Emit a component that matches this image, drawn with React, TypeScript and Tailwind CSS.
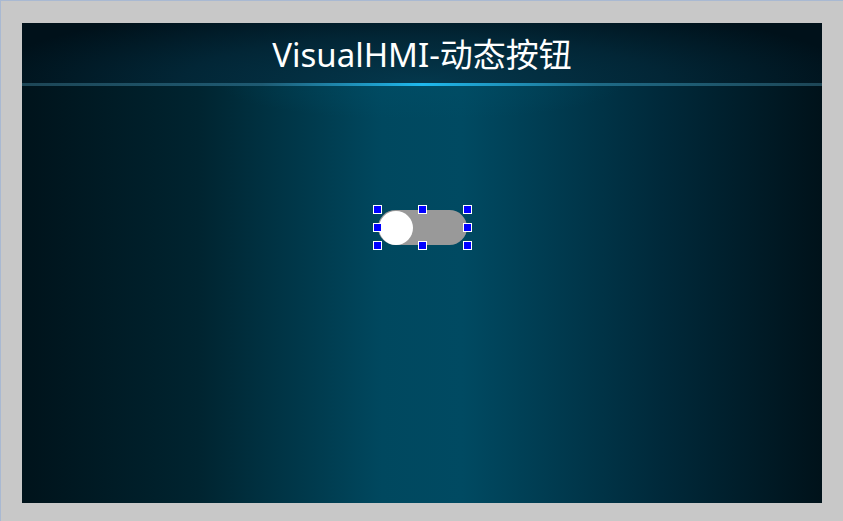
import { useState } from 'react';

function Handle({ hidden = false }: { hidden?: boolean }) {
  return <div className={`w-[9px] h-[9px] border ${hidden ? 'invisible' : 'bg-[#0000ff] border-white'}`} />;
}

export default function App() {
  const [on, setOn] = useState(false);

  return (
    <div className="w-[843px] h-[521px] bg-[#c8c8c8] border-t border-l border-[#a9b9d2] pt-[22px] pl-[21px] overflow-hidden">
      <div className="w-[800px] h-[480px] flex flex-col bg-[linear-gradient(90deg,#00131b_0%,#002430_22%,#00485f_45%,#004a62_55%,#00293a_80%,#00121a_100%)]">
        <div className="h-[60px] flex items-center justify-center bg-[radial-gradient(ellipse_55%_140%_at_50%_100%,#04384d_0%,#022636_55%,#00111a_100%)]">
          <span className="text-white text-[33px] leading-none font-['Noto_Sans','Noto_Sans_CJK_SC',sans-serif] mt-[2px]">
            VisualHMI-动态按钮
          </span>
        </div>
        <div className="h-[3px] bg-[linear-gradient(90deg,#1d4656_0%,#1e5a72_30%,#1fb9ee_50%,#1e6a86_72%,#1d4656_100%)]" />
        <div className="flex-1 flex justify-center pt-[123px] bg-[radial-gradient(ellipse_25%_8%_at_50%_0%,rgba(0,80,105,0.4),transparent)]">
          <div className="relative w-[91px] h-[37px] p-[1px]">
            <button
              onClick={() => setOn(!on)}
              className={`w-[89px] h-[35px] rounded-full flex items-center px-[1px] ${on ? 'bg-[#2bb24c] justify-end' : 'bg-[#999999] justify-start'}`}
            >
              <span className="w-[34px] h-[34px] rounded-full bg-white" />
            </button>
            {/* selection handles */}
            <div className="absolute -inset-[4px] flex flex-col justify-between pointer-events-none">
              <div className="flex justify-between"><Handle /><Handle /><Handle /></div>
              <div className="flex justify-between"><Handle /><Handle hidden /><Handle /></div>
              <div className="flex justify-between"><Handle /><Handle /><Handle /></div>
            </div>
          </div>
        </div>
      </div>
    </div>
  );
}
